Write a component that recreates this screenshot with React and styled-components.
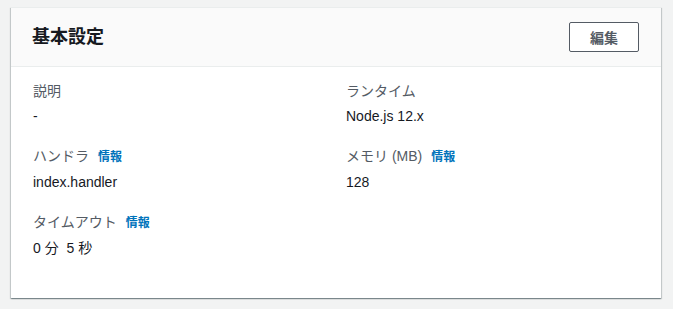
import styled, { createGlobalStyle } from "styled-components";

const GlobalStyle = createGlobalStyle`
  html, body {
    margin: 0;
    padding: 0;
    background: #f2f3f3;
  }
  body {
    font-family: "Liberation Sans", "Noto Sans CJK JP", sans-serif;
    color: #16191f;
  }
`;

const Page = styled.div`
  padding: 7px 12px 12px 11px;
`;

const Card = styled.section`
  width: 650px;
  background: #fff;
  box-shadow: 0 1px 1px 0 rgba(0, 28, 36, 0.3),
    1px 1px 1px 0 rgba(0, 28, 36, 0.15), -1px 1px 1px 0 rgba(0, 28, 36, 0.15);
  border-top: 1px solid #eaeded;
`;

const Header = styled.div`
  display: flex;
  align-items: center;
  justify-content: space-between;
  background: #fafafa;
  border-bottom: 1px solid #eaeded;
  padding: 14px 22px 14px 21px;
  height: 30px;
`;

const Title = styled.h2`
  margin: 0;
  font-size: 18px;
  font-weight: 700;
  line-height: 22px;
  color: #16191f;
`;

const EditButton = styled.button`
  width: 70px;
  height: 30px;
  background: #fff;
  border: 1px solid #545b64;
  border-radius: 2px;
  color: #545b64;
  font-family: inherit;
  font-size: 14px;
  font-weight: 700;
  padding: 0;
`;

const Body = styled.div`
  display: grid;
  grid-template-columns: 293px 293px;
  column-gap: 20px;
  align-items: start;
  padding: 13px 22px 39px;
`;

const Column = styled.div`
  display: flex;
  flex-direction: column;
  gap: 18px;
`;

const Field = styled.div`
  display: flex;
  flex-direction: column;
  gap: 3px;
`;

const Label = styled.div`
  font-size: 14px;
  line-height: 22px;
  color: #545b64;
`;

const Info = styled.a`
  margin-left: 9px;
  font-size: 12px;
  font-weight: 700;
  color: #0073bb;
  text-decoration: none;
`;

const Value = styled.div`
  font-size: 14px;
  line-height: 22px;
  color: #16191f;
  white-space: pre;
`;

const left = [
  { label: "説明", value: "-" },
  { label: "ハンドラ", value: "index.handler", info: true },
  { label: "タイムアウト", value: "0 分  5 秒", info: true },
];

const right = [
  { label: "ランタイム", value: "Node.js 12.x" },
  { label: "メモリ (MB)", value: "128", info: true },
];

const renderField = (f) => (
  <Field key={f.label}>
    <Label>
      {f.label}
      {f.info && <Info href="#">情報</Info>}
    </Label>
    <Value>{f.value}</Value>
  </Field>
);

export default function App() {
  return (
    <>
      <GlobalStyle />
      <Page>
        <Card>
          <Header>
            <Title>基本設定</Title>
            <EditButton>編集</EditButton>
          </Header>
          <Body>
            <Column>{left.map(renderField)}</Column>
            <Column>{right.map(renderField)}</Column>
          </Body>
        </Card>
      </Page>
    </>
  );
}
